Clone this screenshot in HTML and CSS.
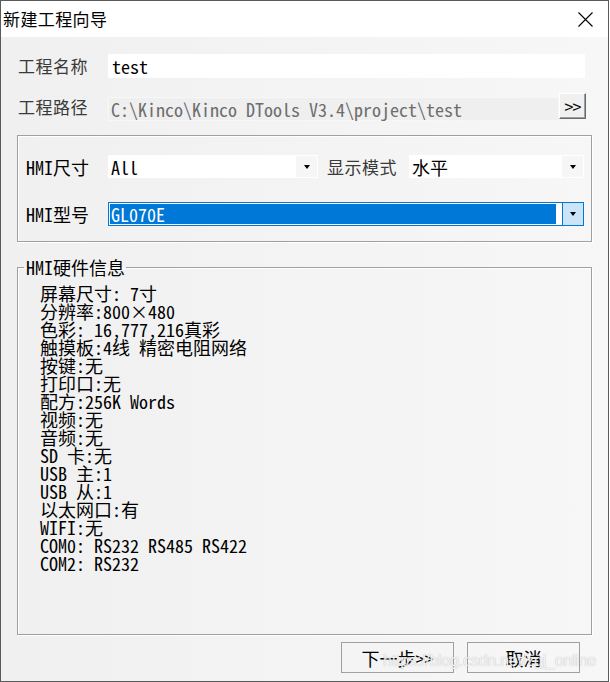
FILE: index.html
```html
<!DOCTYPE html>
<html lang="zh-CN">
<head>
<meta charset="utf-8">
<title>新建工程向导</title>
<link rel="stylesheet" href="styles.css">
</head>
<body>
<div class="window">
  <div class="titlebar">
    <span class="title">新建工程向导</span>
    <svg class="close" width="15" height="15" viewBox="0 0 15 15"><path d="M0.5 0.5L14.5 14.5M14.5 0.5L0.5 14.5" stroke="#000" stroke-width="1.1" fill="none"/></svg>
  </div>
  <div class="content">
    <div class="row r1">
      <span class="lbl">工程名称</span>
      <div class="input song">test</div>
    </div>
    <div class="row r2">
      <span class="lbl">工程路径</span>
      <div class="input disabled song">C:\Kinco\Kinco DTools V3.4\project\test</div>
      <div class="browse song">&gt;&gt;</div>
    </div>
    <div class="group g1">
      <div class="grow">
        <span class="hlbl song">HMI尺寸</span>
        <div class="combo c1"><span class="val song">All</span><span class="drop"><i class="tri"></i></span></div>
        <span class="lbl mode">显示模式</span>
        <div class="combo c2"><span class="val song">水平</span><span class="drop"><i class="tri"></i></span></div>
      </div>
      <div class="grow g2row">
        <span class="hlbl song">HMI型号</span>
        <div class="combo sel"><span class="val song">GL070E</span><span class="drop"><i class="tri"></i></span></div>
      </div>
    </div>
    <fieldset class="group info-box">
      <legend class="song">HMI硬件信息</legend>
      <div class="info song">
        <div>屏幕尺寸: 7寸</div>
        <div>分辨率:800×480</div>
        <div>色彩: 16,777,216真彩</div>
        <div>触摸板:4线 精密电阻网络</div>
        <div>按键:无</div>
        <div>打印口:无</div>
        <div>配方:256K Words</div>
        <div>视频:无</div>
        <div>音频:无</div>
        <div>SD 卡:无</div>
        <div>USB 主:1</div>
        <div>USB 从:1</div>
        <div>以太网口:有</div>
        <div>WIFI:无</div>
        <div>COM0: RS232 RS485 RS422</div>
        <div>COM2: RS232</div>
      </div>
    </fieldset>
    <div class="buttons">
      <div class="btn song">下一步&gt;&gt;</div>
      <div class="btn song">取消</div>
    </div>
  </div>
  <div class="watermark">https://blog.csdn.net/zgj_online</div>
</div>
</body>
</html>
```

FILE: styles.css
```css
html, body {
  margin: 0;
  padding: 0;
  background: #ffffff;
}

.window {
  position: relative;
  width: 609px;
  height: 682px;
  box-sizing: border-box;
  border: 1px solid #5a5a5a;
  background: linear-gradient(to right, #f0f0f0, #f7f7f7);
  font-family: "Noto Sans CJK SC", sans-serif;
  color: #000;
  overflow: hidden;
}

.song {
  font-family: "Noto Sans Mono CJK SC", "Noto Sans CJK SC", monospace;
  font-size: 18px;
  line-height: 18px;
}

.titlebar {
  height: 36px;
  background: #fff;
  display: flex;
  align-items: center;
  justify-content: space-between;
  padding: 0 15px 0 2px;
}

.title {
  font-size: 17px;
  line-height: 20px;
  letter-spacing: 0.4px;
}

.close {
  display: block;
}

.content {
  padding: 0 16px;
  display: flex;
  flex-direction: column;
}

.row {
  display: flex;
  padding-left: 1px;
}

.r1 {
  margin-top: 17px;
  align-items: center;
  height: 24px;
}

.r2 {
  margin-top: 15px;
  align-items: flex-start;
  height: 28px;
}

.lbl {
  width: 90px;
  font-size: 17px;
  line-height: 20px;
  color: #3a3a3a;
  letter-spacing: 0.5px;
}

.r2 .lbl {
  margin-top: 4px;
}

.input {
  width: 477px;
  height: 24px;
  background: #fff;
  box-sizing: border-box;
  padding-left: 4px;
  display: flex;
  align-items: center;
}

.input.disabled {
  width: 451px;
  margin-top: 4px;
  background: #efefef;
  border: 1px solid #f7f7f7;
  padding-left: 2px;
  color: #6d6d6d;
}

.browse {
  width: 27px;
  height: 26px;
  box-sizing: border-box;
  background: #f0f0f0;
  border: 1px solid;
  border-color: #fff #696969 #696969 #fff;
  box-shadow: inset -1px -1px 0 #a0a0a0;
  display: flex;
  align-items: center;
  justify-content: center;
  color: #111;
  letter-spacing: -1px;
  padding-bottom: 1px;
}

.group {
  width: 575px;
  box-sizing: border-box;
  border: 1px solid #a0a0a0;
  box-shadow: inset 1px 1px 0 #ffffff, 1px 1px 0 #ffffff;
}

.g1 {
  margin-top: 14px;
  height: 107px;
  padding: 19px 0 0 8px;
}

.grow {
  display: flex;
  align-items: center;
}

.g2row {
  margin-top: 24px;
}

.hlbl {
  width: 82px;
}

.combo {
  display: flex;
  align-items: stretch;
  box-sizing: border-box;
  height: 23px;
  background: #fff;
  border: 1px solid #fff;
}

.combo .val {
  flex: 1;
  display: flex;
  align-items: center;
  padding-left: 2px;
}

.combo .drop {
  width: 21px;
  background: #f6f6f6;
  display: flex;
  align-items: center;
  justify-content: center;
}

.tri {
  display: block;
  width: 0;
  height: 0;
  border-left: 3.5px solid transparent;
  border-right: 3.5px solid transparent;
  border-top: 4px solid #000;
}

.c1 {
  width: 210px;
}

.mode {
  width: 82px;
  margin-left: 9px;
  color: #3a3a3a;
}

.c2 {
  width: 175px;
}

.sel {
  width: 476px;
  height: 24px;
  border-color: #0078d7;
}

.sel .val {
  margin: 1px 6px 1px 1px;
  background: #0078d7;
  color: #fff;
  padding-left: 1px;
}

.sel .drop {
  background: #cce4f7;
  border-left: 1px solid #0078d7;
  width: 20px;
}

.info-box {
  margin: 16px 0 0 0;
  height: 377px;
  padding: 8px 0 0 22px;
  min-width: 0;
}

.info-box legend {
  margin-left: -16px;
  padding: 0 1px 0 2px;
}

.info div {
  height: 18px;
  white-space: pre;
}

.buttons {
  margin-top: 7px;
  display: flex;
  justify-content: flex-end;
  gap: 13px;
  padding-right: 12px;
}

.btn {
  width: 113px;
  height: 31px;
  box-sizing: border-box;
  border: 1px solid #a0a0a0;
  display: flex;
  align-items: center;
  justify-content: center;
}

.watermark {
  position: absolute;
  left: 382px;
  top: 650px;
  font-family: "Liberation Sans", Arial, sans-serif;
  font-size: 16px;
  line-height: 20px;
  letter-spacing: -0.2px;
  color: rgba(255, 255, 255, 0.85);
  text-shadow: 0 0 1px rgba(120, 120, 120, 0.6);
  white-space: nowrap;
}
```
